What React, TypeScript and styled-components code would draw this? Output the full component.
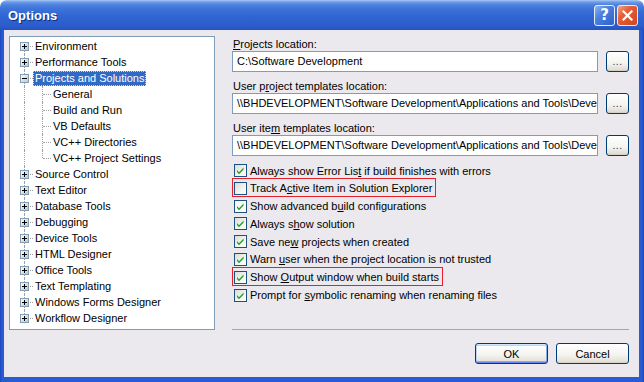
import React from 'react'
import styled, { createGlobalStyle } from 'styled-components'

type Line = 'first' | 'tee' | 'last' | 'pipe'

interface ITreeNode {
  label: string
  expanded?: boolean
  selected?: boolean
  children?: string[]
}

interface ICheckOption {
  before: string
  key: string
  after: string
  checked: boolean
  hot?: boolean
  flagged?: boolean
}

const treeNodes: ITreeNode[] = [
  { label: 'Environment' },
  { label: 'Performance Tools' },
  {
    label: 'Projects and Solutions',
    expanded: true,
    selected: true,
    children: ['General', 'Build and Run', 'VB Defaults', 'VC++ Directories', 'VC++ Project Settings'],
  },
  { label: 'Source Control' },
  { label: 'Text Editor' },
  { label: 'Database Tools' },
  { label: 'Debugging' },
  { label: 'Device Tools' },
  { label: 'HTML Designer' },
  { label: 'Office Tools' },
  { label: 'Text Templating' },
  { label: 'Windows Forms Designer' },
  { label: 'Workflow Designer' },
]

const checkOptions: ICheckOption[] = [
  { before: 'Always show Error Lis', key: 't', after: ' if build finishes with errors', checked: true },
  { before: 'Track A', key: 'c', after: 'tive Item in Solution Explorer', checked: false, flagged: true },
  { before: 'Show advanced b', key: 'u', after: 'ild configurations', checked: true, hot: true },
  { before: 'Always s', key: 'h', after: 'ow solution', checked: true },
  { before: 'Save ne', key: 'w', after: ' projects when created', checked: true },
  { before: 'Warn ', key: 'u', after: 'ser when the project location is not trusted', checked: true },
  { before: 'Show ', key: 'O', after: 'utput window when build starts', checked: true, flagged: true },
  { before: 'Prompt for ', key: 's', after: 'ymbolic renaming when renaming files', checked: true },
]

const Expander = ({ open }: { open: boolean }) => (
  <ExpanderSvg width="9" height="9" viewBox="0 0 9 9">
    <defs>
      <linearGradient id={open ? 'exp-open' : 'exp-closed'} x1="0" y1="0" x2="1" y2="1">
        <stop offset="0" stopColor="#ffffff" />
        <stop offset="1" stopColor="#c4c2b4" />
      </linearGradient>
    </defs>
    <rect x="0.5" y="0.5" width="8" height="8" fill={`url(#${open ? 'exp-open' : 'exp-closed'})`} stroke="#7f9db9" />
    <rect x="2" y="4" width="5" height="1" fill="#000" />
    {!open && <rect x="4" y="2" width="1" height="5" fill="#000" />}
  </ExpanderSvg>
)

const CheckBox = ({ checked, hot }: { checked: boolean; hot?: boolean }) => (
  <Box $hot={hot}>
    {checked && (
      <svg width="11" height="11" viewBox="0 0 11 11">
        <path d="M2 5 L4 7.2 L8.6 2.6 L8.6 4.6 L4 9.2 L2 7 Z" fill="#21a121" />
      </svg>
    )}
  </Box>
)

const App: React.FC = () => {
  const renderRow = (lines: Line[], label: string, key: string, node?: ITreeNode) => (
    <TreeRow key={key}>
      {lines.map((line, i) => (
        <Cell key={i} $line={line}>
          {node && i === lines.length - 1 && <Expander open={!!node.expanded} />}
        </Cell>
      ))}
      <NodeLabel $selected={!!(node && node.selected)}>{label}</NodeLabel>
    </TreeRow>
  )

  const rows: React.ReactNode[] = []
  treeNodes.forEach((node, idx) => {
    const isLast = idx === treeNodes.length - 1
    const line: Line = idx === 0 ? 'first' : isLast ? 'last' : 'tee'
    rows.push(renderRow([line], node.label, node.label, node))
    if (node.expanded && node.children) {
      node.children.forEach((child, ci) => {
        const childLine: Line = ci === node.children!.length - 1 ? 'last' : 'tee'
        rows.push(renderRow(['pipe', childLine], child, `${node.label}-${child}`))
      })
    }
  })

  return (
    <React.Fragment>
      <GlobalStyle />
      <Window>
        <TitleBar>
          <Title>Options</Title>
          <CaptionButtons>
            <CaptionButton $kind="help">?</CaptionButton>
            <CaptionButton $kind="close">
              <svg width="11" height="11" viewBox="0 0 11 11">
                <path d="M1.5 1.5 L9.5 9.5 M9.5 1.5 L1.5 9.5" stroke="#fff" strokeWidth="2.2" strokeLinecap="square" />
              </svg>
            </CaptionButton>
          </CaptionButtons>
        </TitleBar>
        <Frame>
          <Body>
            <Main>
              <Tree>{rows}</Tree>
              <Page>
                <FieldLabel>
                  <u>P</u>rojects location:
                </FieldLabel>
                <FieldRow>
                  <TextBox>C:\Software Development</TextBox>
                  <BrowseButton>...</BrowseButton>
                </FieldRow>
                <FieldLabel>
                  User p<u>r</u>oject templates location:
                </FieldLabel>
                <FieldRow>
                  <TextBox>\\BHDEVELOPMENT\Software Development\Applications and Tools\Deve</TextBox>
                  <BrowseButton>...</BrowseButton>
                </FieldRow>
                <FieldLabel>
                  User ite<u>m</u> templates location:
                </FieldLabel>
                <FieldRow>
                  <TextBox>\\BHDEVELOPMENT\Software Development\Applications and Tools\Deve</TextBox>
                  <BrowseButton>...</BrowseButton>
                </FieldRow>
                <CheckList>
                  {checkOptions.map(option => (
                    <CheckRow key={option.before + option.after}>
                      <CheckLabel $flagged={option.flagged}>
                        <CheckBox checked={option.checked} hot={option.hot} />
                        <span>
                          {option.before}
                          <u>{option.key}</u>
                          {option.after}
                        </span>
                      </CheckLabel>
                    </CheckRow>
                  ))}
                </CheckList>
                <Separator />
              </Page>
            </Main>
            <ButtonRow>
              <DialogButton $default>OK</DialogButton>
              <DialogButton>Cancel</DialogButton>
            </ButtonRow>
          </Body>
        </Frame>
      </Window>
    </React.Fragment>
  )
}

const GlobalStyle = createGlobalStyle`
  html, body {
    margin: 0;
    padding: 0;
    background: #ffffff;
  }
  body {
    font-family: "Liberation Sans", Arial, sans-serif;
    font-size: 11px;
    color: #000;
  }
`

const Window = styled.div`
  width: 644px;
  height: 382px;
  display: flex;
  flex-direction: column;
  border-radius: 7px 7px 0 0;
  overflow: hidden;
`

const TitleBar = styled.div`
  height: 30px;
  flex: none;
  display: flex;
  align-items: center;
  justify-content: space-between;
  padding: 0 6px 0 8px;
  box-sizing: border-box;
  background: linear-gradient(
    to bottom,
    #a9c8f5 0px,
    #6d9ce8 2px,
    #4a80de 5px,
    #3a70d8 10px,
    #2f63d0 18px,
    #2b5dcb 26px,
    #2452c0 30px
  );
`

const Title = styled.div`
  color: #fff;
  font-family: "Liberation Sans", Arial, sans-serif;
  font-weight: bold;
  font-size: 13px;
  text-shadow: 1px 1px 0 #0e2f82;
  padding-top: 1px;
`

const CaptionButtons = styled.div`
  display: flex;
  gap: 2px;
`

const CaptionButton = styled.div<{ $kind: 'help' | 'close' }>`
  width: 21px;
  height: 21px;
  box-sizing: border-box;
  border: 1px solid #e6eefc;
  border-radius: 3px;
  display: flex;
  align-items: center;
  justify-content: center;
  color: #fff;
  font-family: "DejaVu Sans", sans-serif;
  font-weight: bold;
  font-size: 15px;
  background: ${p =>
    p.$kind === 'close'
      ? 'linear-gradient(135deg, #f0a58a 0%, #e2603a 35%, #cf4620 100%)'
      : 'linear-gradient(135deg, #8fb4f0 0%, #4a7fe0 40%, #2f60cc 100%)'};
`

const Frame = styled.div`
  flex: 1;
  display: flex;
  min-height: 0;
  padding: 0 5px 5px 4px;
  background: linear-gradient(to right, #1c48c0 0, #2a5bd4 2px, #2a5bd4 calc(100% - 2px), #1a42b5 100%);
`

const Body = styled.div`
  flex: 1;
  min-width: 0;
  display: flex;
  flex-direction: column;
  background: #ebe9ed;
  padding: 6px 10px 13px 5px;
`

const Main = styled.div`
  display: flex;
  gap: 17px;
  height: 295px;
`

const Tree = styled.div`
  width: 206px;
  flex: none;
  box-sizing: border-box;
  border: 1px solid #7f9db9;
  background: #fff;
  padding: 1px 0 0 5px;
`

const TreeRow = styled.div`
  display: flex;
  height: 16px;
  align-items: center;
`

const Cell = styled.span<{ $line: Line }>`
  position: relative;
  width: 18px;
  height: 16px;
  flex: none;
  &::before {
    content: '';
    position: absolute;
    left: 9px;
    top: ${p => (p.$line === 'first' ? '8px' : '0')};
    bottom: ${p => (p.$line === 'last' ? '8px' : '0')};
    border-left: 1px dotted #a0a0a0;
  }
  &::after {
    content: '';
    display: ${p => (p.$line === 'pipe' ? 'none' : 'block')};
    position: absolute;
    left: 10px;
    right: 0;
    top: 8px;
    border-top: 1px dotted #a0a0a0;
  }
`

const ExpanderSvg = styled.svg`
  position: absolute;
  left: 5px;
  top: 4px;
  z-index: 1;
  display: block;
`

const NodeLabel = styled.span<{ $selected: boolean }>`
  padding: 0 2px;
  height: 15px;
  line-height: 15px;
  box-sizing: border-box;
  white-space: nowrap;
  color: ${p => (p.$selected ? '#fff' : '#000')};
  background: ${p => (p.$selected ? '#316ac5' : 'transparent')};
  outline: ${p => (p.$selected ? '1px dotted #c8d4ee' : 'none')};
  outline-offset: -1px;
`

const Page = styled.div`
  flex: 1;
  min-width: 0;
  display: flex;
  flex-direction: column;
  padding-top: 2px;
`

const FieldLabel = styled.div`
  height: 13px;
  line-height: 13px;
  padding-left: 1px;
  white-space: nowrap;
`

const FieldRow = styled.div`
  display: flex;
  gap: 8px;
  align-items: center;
  margin: 0 0 7px;
  height: 21px;
  & + ${FieldLabel} {
    margin-top: 1px;
  }
`

const TextBox = styled.div`
  flex: 1;
  min-width: 0;
  height: 21px;
  box-sizing: border-box;
  border: 1px solid #7f9db9;
  background: #fff;
  padding: 0 2px 0 4px;
  line-height: 19px;
  white-space: nowrap;
  overflow: hidden;
`

const BrowseButton = styled.div`
  width: 23px;
  height: 21px;
  flex: none;
  box-sizing: border-box;
  border: 1px solid #003c74;
  border-radius: 3px;
  background: linear-gradient(to bottom, #ffffff 0%, #f4f3ee 60%, #dcd8cd 100%);
  box-shadow: inset 0 -1px 0 #d6d0c5;
  display: flex;
  align-items: center;
  justify-content: center;
  color: #1b2f6e;
  font-size: 10px;
  letter-spacing: 0.5px;
  padding-bottom: 1px;
`

const CheckList = styled.div`
  display: flex;
  flex-direction: column;
  margin-top: 1px;
`

const CheckRow = styled.div`
  height: 17.8px;
  display: flex;
  align-items: flex-start;
`

const CheckLabel = styled.div<{ $flagged?: boolean }>`
  position: relative;
  display: inline-flex;
  align-items: center;
  gap: 3px;
  height: 13px;
  margin-left: 2px;
  white-space: nowrap;
  &::after {
    content: '';
    display: ${p => (p.$flagged ? 'block' : 'none')};
    position: absolute;
    left: -2px;
    right: -4px;
    top: -4px;
    bottom: -2px;
    border: 1px solid #e8202a;
  }
`

const Box = styled.span<{ $hot?: boolean }>`
  width: 13px;
  height: 13px;
  flex: none;
  box-sizing: border-box;
  border: 1px solid #1c5180;
  display: flex;
  align-items: center;
  justify-content: center;
  background: ${p =>
    p.$hot
      ? 'linear-gradient(135deg, #fee6a8 0%, #f8b336 45%, #f5a93a 100%)'
      : 'linear-gradient(135deg, #dcdcd7 0%, #f4f4f0 60%, #ffffff 100%)'};
  box-shadow: ${p => (p.$hot ? 'inset 0 0 0 2px #fdd27c' : 'none')};
  & svg {
    background: ${p => (p.$hot ? 'linear-gradient(135deg, #f3f2ec, #fff)' : 'transparent')};
  }
`

const Separator = styled.div`
  margin-top: auto;
  height: 1px;
  background: #aca899;
`

const ButtonRow = styled.div`
  display: flex;
  justify-content: flex-end;
  gap: 8px;
  margin-top: 13px;
`

const DialogButton = styled.div<{ $default?: boolean }>`
  width: 73px;
  height: 21px;
  box-sizing: border-box;
  border: 1px solid #003c74;
  border-radius: 3px;
  display: flex;
  align-items: center;
  justify-content: center;
  background: linear-gradient(to bottom, #ffffff 0%, #f5f4ef 55%, #e5e2d9 90%, #d6d0c5 100%);
  box-shadow: ${p =>
    p.$default
      ? 'inset 0 1px 0 #cee7ff, inset 0 -1px 0 #6982ee, inset 1px 0 0 #bcd4f6, inset -1px 0 0 #89ade4, inset 0 2px 0 #bcd4f6, inset 0 -2px 0 #89ade4'
      : 'none'};
`

export default App
